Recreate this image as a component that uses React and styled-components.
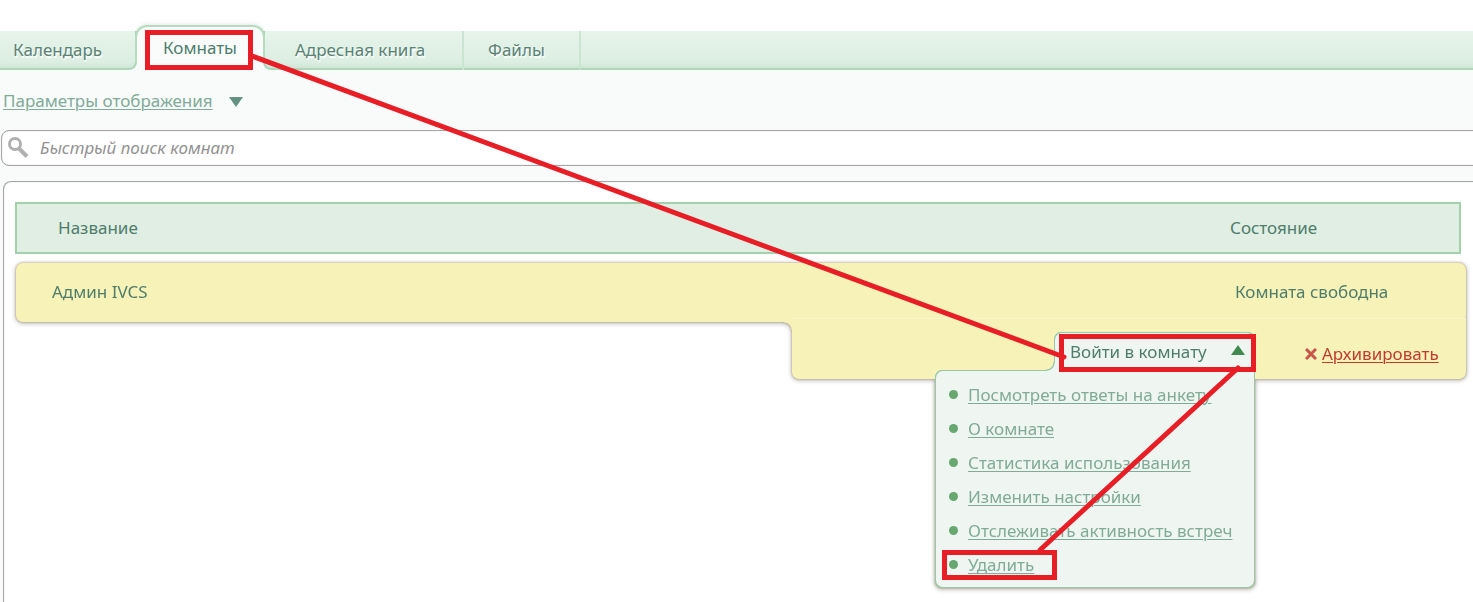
import React, { useState } from 'react'
import styled, { createGlobalStyle } from 'styled-components'


const menuItems = [
    'Посмотреть ответы на анкету',
    'О комнате',
    'Статистика использования',
    'Изменить настройки',
    'Отслеживать активность встреч',
    'Удалить',
]

const App = () => {
    const [isOpen, setIsOpen] = useState(true);
    const [search, setSearch] = useState('');

  return (
    <Page>
        <GlobalStyle />

        <Tabs>
            <Tab href="#calendar" $width={137} $side="left">Календарь</Tab>
            <ActiveTab href="#rooms" aria-current="page">Комнаты</ActiveTab>
            <Tab href="#contacts" $width={201} $side="right">Адресная книга</Tab>
            <Tab href="#files" $width={117}>Файлы</Tab>
            <TabsFiller />
        </Tabs>

        <Content>
            <ViewOptions>
                <OptionsLink href="#options">Параметры отображения</OptionsLink>
                <svg width="14" height="12" viewBox="0 0 14 12" aria-hidden="true">
                    <path d="M0 2H14L7 12Z" fill="#649282" />
                </svg>
            </ViewOptions>

            <SearchBox>
                <svg width="22" height="22" viewBox="0 0 22 22" fill="none" stroke="#b0b0b0" aria-hidden="true">
                    <circle cx="8" cy="7" r="5.500" strokeWidth="3" />
                    <path d="M12 11.500L20 19.500" strokeWidth="4" />
                </svg>
                <SearchInput
                    type="text"
                    aria-label="Быстрый поиск комнат"
                    placeholder="Быстрый поиск комнат"
                    value={search}
                    onChange={(e) => setSearch(e.target.value)}
                />
            </SearchBox>

            <Panel>
                <RoomsTable>
                    <TableHead>
                        <HeadRow>
                            <HeadCell>Название</HeadCell>
                            <HeadCell $state>Состояние</HeadCell>
                        </HeadRow>
                    </TableHead>
                    <TableBody>
                        <RoomRow>
                            <RoomCell>Админ IVCS</RoomCell>
                            <RoomCell $state>Комната свободна</RoomCell>
                        </RoomRow>
                        <ActionsRow>
                            <ActionsCell colSpan={2}>
                                <Dropdown>
                                    <EnterButton aria-expanded={isOpen} onClick={() => setIsOpen(!isOpen)}>
                                        Войти в комнату
                                        <svg width="14" height="14" viewBox="0 0 14 14" aria-hidden="true">
                                            <path d="M7 0L14 10H0Z" fill="#418a4f" />
                                        </svg>
                                    </EnterButton>
                                    {isOpen && (
                                        <Menu>
                                            {menuItems.map((item) => (
                                                <MenuItem key={item}><MenuLink href="#room">{item}</MenuLink></MenuItem>
                                            ))}
                                        </Menu>
                                    )}
                                </Dropdown>
                                <Archive>
                                    <svg width="12" height="12" viewBox="0 0 12 12" stroke="#c8544a" strokeWidth="3" aria-hidden="true">
                                        <path d="M1 1L11 11M11 1L1 11" />
                                    </svg>
                                    <ArchiveLink href="#archive">Архивировать</ArchiveLink>
                                </Archive>
                            </ActionsCell>
                        </ActionsRow>
                    </TableBody>
                </RoomsTable>
            </Panel>
        </Content>

        {/* Steps of the guide drawn over the page */}
        <Guide width="1473" height="602" viewBox="0 0 1473 602" aria-hidden="true">
            <rect x="147.500" y="32.500" width="103" height="35" />
            <rect x="1061.500" y="336.500" width="192" height="33" />
            <rect x="944.500" y="552.500" width="110" height="25" />
            <path d="M252 56L1064 357" />
            <path d="M1238 368L1040 550" />
        </Guide>
    </Page>
  )
}

const GlobalStyle = createGlobalStyle`
    * {
        box-sizing: border-box;
    }

    body {
        margin: 0;
        background-color: #ffffff;
        color: #4f7d6c;
        font-family: "Noto Sans", "Open Sans", sans-serif;
        font-size: 17px;
        line-height: 24px;
    }
`

const Page = styled.div`
    position: relative;
    display: flex;
    flex-direction: column;
    min-height: 100vh;
    overflow: hidden;
`

const Tabs = styled.nav`
    display: flex;
    align-items: flex-end;
    padding-top: 25px;
    background: linear-gradient(#ffffff 50px, #f8fbfa 50px);
`

const Tab = styled.a`
    display: flex;
    align-items: center;
    flex: 0 0 ${({ $width }) => $width}px;
    height: 39px;
    padding-left: ${({ $side }) => ($side === 'left' ? 13 : $side === 'right' ? 30 : 24)}px;
    border-bottom: 2px solid #acd8b7;
    border-right: 2px solid ${({ $side }) => ($side === 'left' ? '#acd8b7' : '#cbe5d2')};
    border-left: ${({ $side }) => ($side === 'right' ? '2px solid #acd8b7' : 'none')};
    border-radius: ${({ $side }) => ($side === 'left' ? '0 0 8px 0' : $side === 'right' ? '0 0 0 8px' : '0')};
    background: linear-gradient(#e7f4eb, #dceee2 85%, #d0e5d6);
    color: #5c8274;
    text-decoration: none;
    text-shadow: 1px 2px 1px #ffffff;
`

const ActiveTab = styled.a`
    display: flex;
    align-items: center;
    justify-content: center;
    flex: 0 0 130px;
    height: 45px;
    margin: 0 -2px;
    padding-bottom: 2px;
    border: 2px solid #b5dcbf;
    border-bottom: none;
    border-radius: 12px 12px 0 0;
    background-color: #f9fcfa;
    box-shadow: 0 -1px 4px rgba(80, 110, 90, 0.15);
    clip-path: inset(-6px 0 8px 0);
    color: #4f7d6c;
    text-decoration: none;
`

const TabsFiller = styled.div`
    flex: 1;
    height: 39px;
    border-bottom: 2px solid #acd8b7;
    background: linear-gradient(#e7f4eb, #dceee2 85%, #d0e5d6);
`

const Content = styled.div`
    display: flex;
    flex-direction: column;
    flex: 1;
    background-color: #f8fbfa;
`

const ViewOptions = styled.div`
    display: flex;
    align-items: center;
    gap: 16px;
    padding: 19px 3px 17px;
`

const OptionsLink = styled.a`
    color: #80ab98;
    text-underline-offset: 2px;
    text-decoration-thickness: 1px;
`

const SearchBox = styled.label`
    display: flex;
    align-items: center;
    gap: 11px;
    height: 36px;
    margin: 0 -10px 0 1px;
    padding: 0 5px;
    border: 1px solid #a6a6a6;
    border-radius: 8px;
    background-color: #ffffff;
    box-shadow: inset 0 0 1px #a6a6a6;
`

const SearchInput = styled.input`
    flex: 1;
    padding: 0;
    border: none;
    outline: none;
    background: transparent;
    font: inherit;
    font-style: italic;

    &::placeholder{
        color: #929292;
        opacity: 1;
    }
`

const Panel = styled.main`
    flex: 1;
    margin: 15px -10px -4px 3px;
    padding: 20px 15px 20px 11px;
    border: 1px solid #a6a6a6;
    border-bottom: none;
    border-radius: 8px 8px 0 0;
    background-color: #ffffff;
    box-shadow: inset 0 0 1px #a6a6a6;
`

const RoomsTable = styled.table`
    display: block;
`

const TableHead = styled.thead`
    display: block;
`

const HeadRow = styled.tr`
    display: flex;
    align-items: center;
    height: 52px;
    margin-right: 6px;
    border: 2px solid #a3d1aa;
    background-color: #e0eee3;
`

const HeadCell = styled.th`
    flex: ${({ $state }) => ($state ? '0 0 229px' : '1')};
    padding: 0;
    padding-left: ${({ $state }) => ($state ? 0 : 41)}px;
    font-weight: normal;
    text-align: left;
`

/* the outline follows the joined shape of both rows */
const TableBody = styled.tbody`
    display: block;
    margin: 9px 1px 0;
    filter: drop-shadow(0 0 1px #b4a078) drop-shadow(0 1px 2px rgba(70, 60, 60, 0.4));
`

const RoomRow = styled.tr`
    display: flex;
    align-items: center;
    height: 59px;
    border-radius: 7px;
    background-color: #f7f2b8;
`

const RoomCell = styled.td`
    flex: ${({ $state }) => ($state ? '0 0 231px' : '1')};
    padding: 0 0 2px;
    padding-left: ${({ $state }) => ($state ? 0 : 36)}px;
`

const ActionsRow = styled.tr`
    display: flex;
    justify-content: flex-end;
    margin-top: -4px;
`

const ActionsCell = styled.td`
    position: relative;
    display: flex;
    justify-content: flex-end;
    width: 674px;
    height: 61px;
    padding: 15px 0 0;
    border-radius: 0 0 7px 7px;
    background: linear-gradient(#faf6cc 1px, #f7f2b8 1px);

    &::before{
        content: '';
        position: absolute;
        top: 4px;
        left: -8px;
        width: 8px;
        height: 8px;
        background: radial-gradient(circle at 0 100%, transparent 7px, #f7f2b8 8px);
    }
`

const Dropdown = styled.div`
    position: relative;
    height: 38px;
    filter: drop-shadow(1px 0 0 #98c9a8) drop-shadow(-1px 0 0 #98c9a8) drop-shadow(0 1px 0 #98c9a8) drop-shadow(0 -1px 0 #98c9a8);
`

const EnterButton = styled.button`
    display: flex;
    align-items: center;
    justify-content: space-between;
    width: 199px;
    height: 38px;
    padding: 0 9px 0 15px;
    border: none;
    border-radius: 7px 7px 0 0;
    background-color: #eff6f1;
    color: #4f7d6c;
    font: inherit;
    white-space: nowrap;
    cursor: pointer;
`

const Menu = styled.ul`
    position: absolute;
    top: 100%;
    right: 0;
    width: 318px;
    margin: 0;
    padding: 7px 0 5px 13px;
    border-radius: 7px 0 7px 7px;
    background-color: #eff6f1;
    list-style: none;

    &::before{
        content: '';
        position: absolute;
        top: -8px;
        right: 199px;
        width: 8px;
        height: 8px;
        background: radial-gradient(circle at 0 0, transparent 7px, #eff6f1 8px);
    }
`

const MenuItem = styled.li`
    display: flex;
    align-items: center;
    gap: 10px;
    height: 34px;
    white-space: nowrap;

    &::before{
        content: '';
        width: 9px;
        height: 9px;
        margin-bottom: 2px;
        border-radius: 50%;
        background-color: #66a86f;
    }
`

const MenuLink = styled(OptionsLink)``

const Archive = styled.div`
    display: flex;
    align-items: center;
    gap: 5px;
    width: 212px;
    height: 42px;
    padding-left: 51px;
`

const ArchiveLink = styled(OptionsLink)`
    color: #c23b32;
`

const Guide = styled.svg`
    position: absolute;
    top: 0;
    left: 0;
    fill: none;
    stroke: #e81e26;
    stroke-width: 5px;
    stroke-linecap: round;
    pointer-events: none;
`

export default App
